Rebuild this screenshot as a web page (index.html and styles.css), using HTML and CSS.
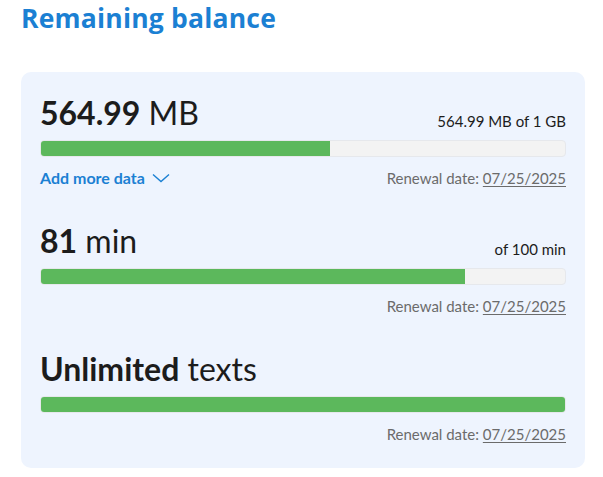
FILE: index.html
```html
<!DOCTYPE html>
<html lang="en">
<head>
<meta charset="UTF-8" />
<meta name="viewport" content="width=device-width, initial-scale=1" />
<title>Remaining balance</title>
<link rel="stylesheet" href="styles.css">
</head>
<body>
  <div class="balance">
    <h1 class="balance-title">Remaining balance</h1>
    <div class="balance-card">
      <div class="usage">
        <div class="usage-head">
          <div class="usage-amount"><b>564.99</b> MB</div>
          <div class="usage-total">564.99 MB of 1 GB</div>
        </div>
        <div class="bar"><div class="bar-fill" style="width:55.17%"></div></div>
        <div class="usage-foot">
          <a class="add-link" href="#">Add more data
            <svg width="18" height="10" viewBox="0 0 18 10"><path d="M1 1.5 L9 8.5 L17 1.5" fill="none" stroke="currentColor" stroke-width="1.4"/></svg>
          </a>
          <div class="renewal">Renewal date: <u>07/25/2025</u></div>
        </div>
      </div>
      <div class="usage">
        <div class="usage-head">
          <div class="usage-amount"><b>81</b> min</div>
          <div class="usage-total">of 100 min</div>
        </div>
        <div class="bar"><div class="bar-fill" style="width:81%"></div></div>
        <div class="usage-foot">
          <span></span>
          <div class="renewal">Renewal date: <u>07/25/2025</u></div>
        </div>
      </div>
      <div class="usage">
        <div class="usage-head">
          <div class="usage-amount"><b>Unlimited</b> texts</div>
        </div>
        <div class="bar"><div class="bar-fill" style="width:100%"></div></div>
        <div class="usage-foot">
          <span></span>
          <div class="renewal">Renewal date: <u>07/25/2025</u></div>
        </div>
      </div>
    </div>
  </div>
</body>
</html>
```

FILE: styles.css
```css
body {
  margin: 0;
  background: #fff;
  color: #1c1c1c;
  font-family: Lato, "Liberation Sans", sans-serif;
}
.balance {
  width: 564px;
  padding: 0 0 0 21px;
}
.balance-title {
  margin: 0 0 36px 0;
  padding-top: 1px;
  font-family: "Open Sans", sans-serif;
  font-size: 26.5px;
  line-height: 35px;
  font-weight: 700;
  color: #1b80d3;
  letter-spacing: 0.2px;
}
.balance-card {
  background: #eef4fe;
  border-radius: 10px;
  padding: 21px 19px 25px 19px;
}
.usage {
  margin-bottom: 34px;
}
.usage:last-child {
  margin-bottom: 0;
}
.usage-head {
  display: flex;
  justify-content: space-between;
  align-items: flex-end;
  height: 47px;
}
.usage-amount {
  font-size: 32px;
  line-height: 40px;
  margin-bottom: 7px;
}
.usage-amount b {
  font-weight: 700;
}
.usage-total {
  font-size: 15px;
  line-height: 18px;
  margin-bottom: 10px;
}
.bar {
  height: 17px;
  background: #f3f3f3;
  border: 1px solid #e6e8ec;
  border-radius: 4px;
  overflow: hidden;
  box-sizing: border-box;
}
.bar-fill {
  height: 100%;
  background: #5cb85c;
}
.usage-foot {
  display: flex;
  justify-content: space-between;
  align-items: center;
  margin-top: 12px;
  font-size: 15px;
  line-height: 18px;
}
.add-link {
  color: #1b80d3;
  font-size: 16px;
  font-weight: 700;
  text-decoration: none;
  display: flex;
  align-items: center;
  gap: 7px;
}
.renewal {
  color: #6b6b6b;
}
.renewal u {
  text-underline-offset: 2px;
}
```
